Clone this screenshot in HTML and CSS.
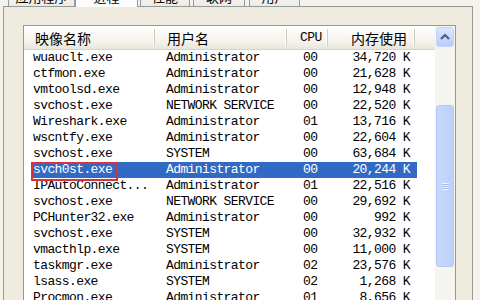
FILE: index.html
```html
<!DOCTYPE html>
<html lang="zh-CN">
<head>
    <meta charset="UTF-8">
    <title>Windows 任务管理器</title>
    <link rel="stylesheet" href="styles.css">
</head>
<body>
    <div class="window">
        <div class="tabs">
            <div class="tab tab-apps">应用程序</div>
            <div class="tab tab-active">进程</div>
            <div class="tab tab-perf">性能</div>
            <div class="tab tab-net">联网</div>
            <div class="tab tab-users">用户</div>
        </div>

        <div class="panel">
            <div class="listbox">
                <div class="list">
                    <div class="header">
                        <div class="hcell h-name">映像名称</div>
                        <div class="hcell h-user">用户名</div>
                        <div class="hcell h-cpu">CPU</div>
                        <div class="hcell h-mem">内存使用</div>
                        <div class="hcell h-fill"></div>
                    </div>

                    <div class="row"><span class="c-name">wuauclt.exe</span><span class="c-user">Administrator</span><span class="c-cpu">00</span><span class="c-mem">34,720 K</span></div>
                    <div class="row"><span class="c-name">ctfmon.exe</span><span class="c-user">Administrator</span><span class="c-cpu">00</span><span class="c-mem">21,628 K</span></div>
                    <div class="row"><span class="c-name">vmtoolsd.exe</span><span class="c-user">Administrator</span><span class="c-cpu">00</span><span class="c-mem">12,948 K</span></div>
                    <div class="row"><span class="c-name">svchost.exe</span><span class="c-user">NETWORK SERVICE</span><span class="c-cpu">00</span><span class="c-mem">22,520 K</span></div>
                    <div class="row"><span class="c-name">Wireshark.exe</span><span class="c-user">Administrator</span><span class="c-cpu">01</span><span class="c-mem">13,716 K</span></div>
                    <div class="row"><span class="c-name">wscntfy.exe</span><span class="c-user">Administrator</span><span class="c-cpu">00</span><span class="c-mem">22,604 K</span></div>
                    <div class="row"><span class="c-name">svchost.exe</span><span class="c-user">SYSTEM</span><span class="c-cpu">00</span><span class="c-mem">63,684 K</span></div>
                    <div class="row selected"><span class="c-name"><span class="marked">svch0st.exe</span></span><span class="c-user">Administrator</span><span class="c-cpu">00</span><span class="c-mem">20,244 K</span></div>
                    <div class="row"><span class="c-name">IPAutoConnect...</span><span class="c-user">Administrator</span><span class="c-cpu">01</span><span class="c-mem">22,516 K</span></div>
                    <div class="row"><span class="c-name">svchost.exe</span><span class="c-user">NETWORK SERVICE</span><span class="c-cpu">00</span><span class="c-mem">29,692 K</span></div>
                    <div class="row"><span class="c-name">PCHunter32.exe</span><span class="c-user">Administrator</span><span class="c-cpu">00</span><span class="c-mem">992 K</span></div>
                    <div class="row"><span class="c-name">svchost.exe</span><span class="c-user">SYSTEM</span><span class="c-cpu">00</span><span class="c-mem">32,932 K</span></div>
                    <div class="row"><span class="c-name">vmacthlp.exe</span><span class="c-user">SYSTEM</span><span class="c-cpu">00</span><span class="c-mem">11,000 K</span></div>
                    <div class="row"><span class="c-name">taskmgr.exe</span><span class="c-user">Administrator</span><span class="c-cpu">02</span><span class="c-mem">23,576 K</span></div>
                    <div class="row"><span class="c-name">lsass.exe</span><span class="c-user">SYSTEM</span><span class="c-cpu">02</span><span class="c-mem">1,268 K</span></div>
                    <div class="row"><span class="c-name">Procmon.exe</span><span class="c-user">Administrator</span><span class="c-cpu">01</span><span class="c-mem">8,656 K</span></div>
                </div>

                <div class="scrollbar">
                    <div class="sb-button">
                        <svg width="16" height="16" viewBox="0 0 16 16">
                            <polyline points="4,10 8,6 12,10" fill="none" stroke="#4d6185" stroke-width="2.2"/>
                        </svg>
                    </div>
                    <div class="sb-thumb">
                        <div class="grip"></div>
                    </div>
                </div>
            </div>
        </div>
    </div>
</body>
</html>
```

FILE: styles.css
```css
body {
    margin: 0;
    width: 480px;
    height: 300px;
    overflow: hidden;
    background-color: #f4f2ea;
    font-family: "Liberation Mono", "Noto Sans CJK SC", monospace;
}

.window {
    height: 300px;
    display: flex;
    flex-direction: column;
}

/* tabs, mostly cut off at the top edge */
.tabs {
    display: flex;
    align-items: flex-end;
    height: 22px;
    margin-top: -16px;
    padding-left: 8px;
}

.tab {
    box-sizing: border-box;
    height: 20px;
    border: 1px solid #919b9c;
    border-bottom: none;
    border-radius: 3px 3px 0 0;
    background: linear-gradient(#ffffff, #ecebe5);
    display: flex;
    align-items: center;
    justify-content: center;
    font-family: "Noto Sans CJK SC", sans-serif;
    font-size: 13px;
    color: #000;
}

.tab-apps { width: 67px; }
.tab-active {
    width: 63px;
    height: 23px;
    margin-bottom: -1px;
    background: #fcfcfe;
    position: relative;
}
.tab-perf { width: 50px; margin-left: 2px; }
.tab-net { width: 52px; margin-left: 3px; }
.tab-users { width: 51px; margin-left: 4px; }

.panel {
    flex: 1;
    margin: 0 7px 0 3px;
    border: 1px solid #919b9c;
    border-bottom: none;
    background-color: #efebde;
    padding: 18px 16px 0 19px;
    display: flex;
    flex-direction: column;
}

.listbox {
    flex: 1;
    display: flex;
    border: 1px solid #7f9db9;
    border-bottom: none;
    background-color: #ffffff;
}

.list {
    flex: 1;
}

.header {
    display: flex;
    height: 23px;
    border-bottom: 1px solid #d6d3c6;
    background: linear-gradient(#ffffff, #f3f2ec 70%, #e8e6da);
}

.hcell {
    box-sizing: border-box;
    display: flex;
    align-items: center;
    font-family: "Noto Sans CJK SC", sans-serif;
    font-size: 14px;
    color: #000;
    border-right: 1px solid #cfccbd;
    box-shadow: inset -1px 0 0 #ffffff;
    margin: 3px 0;
}

.h-name { width: 131px; padding-left: 11px; }
.h-user { width: 132px; padding-left: 12px; }
.h-cpu {
    width: 41px;
    padding-left: 13px;
    font-family: "Liberation Mono", monospace;
    font-size: 13px;
    letter-spacing: -0.5px;
}
.h-mem { width: 87px; padding-left: 23px; }
.h-fill { flex: 1; border-right: none; box-shadow: none; }

.row {
    display: flex;
    width: 385px;
    height: 16px;
    line-height: 16px;
    margin-left: 8px;
    font-size: 13px;
    letter-spacing: -0.6px;
    color: #000;
    white-space: nowrap;
}

.row.selected {
    background-color: #316ac5;
    color: #ffffff;
}

.c-name { width: 133px; padding-left: 1px; }
.c-user { width: 137px; }
.c-cpu { width: 40px; }
.c-mem { flex: 1; text-align: right; padding-right: 7px; }

/* red annotation box */
.marked {
    position: relative;
}

.marked::after {
    content: "";
    position: absolute;
    left: -2px;
    right: -6px;
    top: 0;
    bottom: -4px;
    border: 2px solid #d8323a;
}

.scrollbar {
    width: 20px;
    background-color: #f5f4ef;
    display: flex;
    flex-direction: column;
    padding: 1px 1px 0 1px;
    box-sizing: border-box;
}

.sb-button {
    height: 18px;
    border: 1px solid #c3d3fd;
    border-radius: 3px;
    background: linear-gradient(#dbe6fe, #b9cdf8);
    display: flex;
    align-items: center;
    justify-content: center;
}

.sb-thumb {
    height: 160px;
    margin-top: 58px;
    border: 1px solid #b3c8f5;
    border-radius: 3px;
    background: linear-gradient(90deg, #c8d8fc, #bdd0fa);
    display: flex;
    align-items: center;
    justify-content: center;
}

.grip {
    width: 7px;
    height: 7px;
    background: repeating-linear-gradient(#eef3ff 0 1px, #a9bce6 1px 2px);
}
```
